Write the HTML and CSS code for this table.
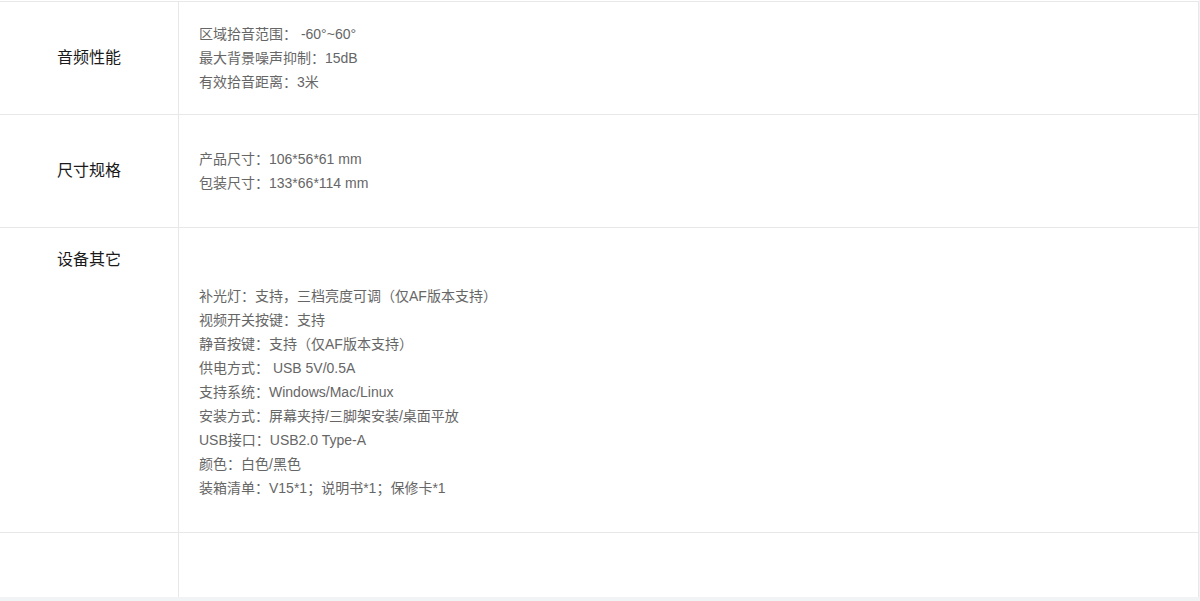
FILE: index.html
```html
<!DOCTYPE html>
<html lang="zh-CN">
<head>
    <meta charset="UTF-8">
    <meta name="viewport" content="width=device-width, initial-scale=1.0">
    <title>产品参数</title>
    <link rel="stylesheet" href="styles.css">
</head>
<body>

    <div class="spec">
        <div class="spec-table">
            <div class="spec-row row-audio">
                <div class="spec-name">音频性能</div>
                <div class="spec-value">
                    <p>区域拾音范围：&nbsp;-60°~60°</p>
                    <p>最大背景噪声抑制：15dB</p>
                    <p>有效拾音距离：3米</p>
                </div>
            </div>

            <div class="spec-row row-size">
                <div class="spec-name">尺寸规格</div>
                <div class="spec-value">
                    <p>产品尺寸：106*56*61 mm</p>
                    <p>包装尺寸：133*66*114 mm</p>
                </div>
            </div>

            <div class="spec-row row-other">
                <div class="spec-name">设备其它</div>
                <div class="spec-value">
                    <p>补光灯：支持，三档亮度可调（仅AF版本支持）</p>
                    <p>视频开关按键：支持</p>
                    <p>静音按键：支持（仅AF版本支持）</p>
                    <p>供电方式：&nbsp;USB 5V/0.5A</p>
                    <p>支持系统：Windows/Mac/Linux</p>
                    <p>安装方式：屏幕夹持/三脚架安装/桌面平放</p>
                    <p>USB接口：USB2.0 Type-A</p>
                    <p>颜色：白色/黑色</p>
                    <p>装箱清单：V15*1；说明书*1；保修卡*1</p>
                </div>
            </div>

            <div class="spec-row row-empty">
                <div class="spec-name"></div>
                <div class="spec-value"></div>
            </div>
        </div>
    </div>

</body>
</html>
```

FILE: styles.css
```css
/* Global Styles */
body {
    margin: 0;
    padding: 0;
    background: #f2f3f5;
    font-family: "Liberation Sans", "Noto Sans CJK SC", sans-serif;
    color: #333;
}

.spec {
    width: 1199px;
    background: #fff;
    padding-top: 1px;
}

.spec-table {
    border-top: 1px solid #e8e8e8;
    border-right: 1px solid #e8e8e8;
}

.spec-row {
    display: grid;
    grid-template-columns: 179px 1fr;
    border-bottom: 1px solid #e8e8e8;
}

.spec-name {
    display: flex;
    align-items: center;
    justify-content: center;
    font-size: 16px;
    line-height: 24px;
    color: #1a1a1a;
    border-right: 1px solid #e8e8e8;
}

.spec-value {
    display: flex;
    flex-direction: column;
    justify-content: center;
    padding-left: 20px;
    font-size: 14px;
    line-height: 24px;
    color: #666;
}

.spec-value p {
    margin: 0;
}

.row-audio,
.row-size {
    height: 112px;
}

.row-other {
    height: 304px;
}

.row-other .spec-name {
    align-items: flex-start;
    padding-top: 20px;
}

.row-other .spec-value {
    justify-content: flex-start;
    padding-top: 56px;
}

.row-empty {
    height: 64px;
    border-bottom: none;
}
```
